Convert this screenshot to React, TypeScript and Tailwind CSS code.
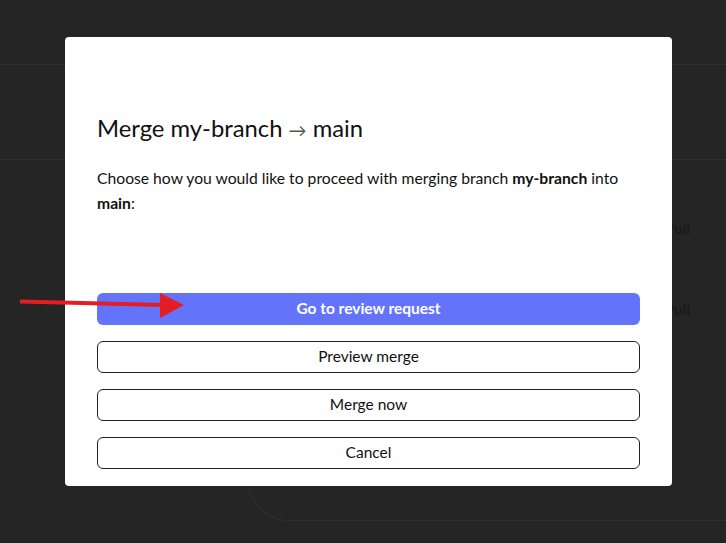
import React from "react";

const options = [
  { label: "Go to review request", primary: true },
  { label: "Preview merge" },
  { label: "Merge now" },
  { label: "Cancel" },
];

function Backdrop() {
  return (
    <div className="absolute inset-0">
      <div className="h-[65px] border-b border-[#2f2f2f]" />
      <div className="h-[95px] border-b border-[#2f2f2f]" />
      <div className="ml-[248px] h-[361px] rounded-bl-[40px] border-b border-l border-[#2f2f2f] pl-[416px] pt-[57px] text-[15px] font-bold text-[#1a1a1a]">
        <p className="h-[81px]">Pull</p>
        <p>Pull</p>
      </div>
    </div>
  );
}

function RedArrow() {
  return (
    <svg
      className="pointer-events-none absolute left-0 top-[285px]"
      width="200"
      height="40"
      viewBox="0 0 200 40"
    >
      <line x1="20" y1="16.5" x2="164" y2="20" stroke="#e31d23" strokeWidth="4" />
      <polygon points="160,8 184,20 160,33" fill="#e31d23" />
    </svg>
  );
}

export default function App() {
  return (
    <div
      className="relative h-[543px] w-full overflow-hidden bg-[#252525]"
      style={{ fontFamily: "Lato, 'Open Sans', sans-serif" }}
    >
      <Backdrop />

      <div className="absolute left-[65px] top-[37px] w-[607px] rounded-[4px] bg-white px-8 pb-[17px] pt-[77px] text-[#111]">
        <h2 className="text-[23.8px] leading-[29px]">
          Merge my-branch <span className="text-[18px] text-[#555]">→</span> main
        </h2>
        <p className="mt-[21px] text-[15.7px] leading-[25px]">
          Choose how you would like to proceed with merging branch <strong>my-branch</strong> into{" "}
          <strong>main</strong>:
        </p>

        <div className="mt-[77px] flex flex-col gap-4">
          {options.map((o) =>
            o.primary ? (
              <button
                key={o.label}
                className="h-8 rounded-md bg-[#6474fa] text-[15.5px] font-bold text-white"
              >
                {o.label}
              </button>
            ) : (
              <button
                key={o.label}
                className="h-8 rounded-md border border-[#222] bg-white text-[15.5px] text-[#111]"
              >
                {o.label}
              </button>
            )
          )}
        </div>
      </div>

      <RedArrow />
    </div>
  );
}
